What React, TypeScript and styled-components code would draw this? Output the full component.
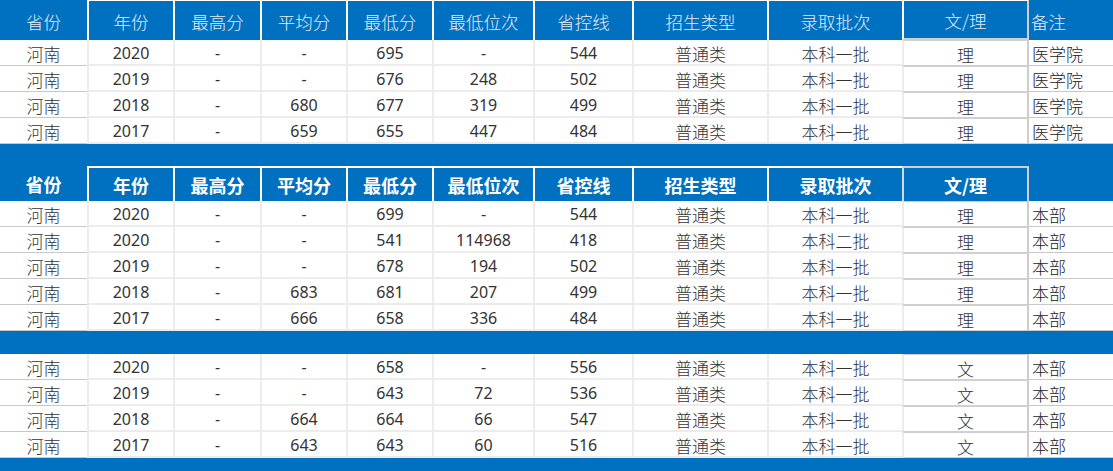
import React from "react";
import styled, { createGlobalStyle, css } from "styled-components";

const GlobalStyle = createGlobalStyle`
  html, body { margin: 0; padding: 0; background: #ffffff; }
  body { font-family: "Noto Sans", "Noto Sans CJK SC", sans-serif; }
  * { box-sizing: border-box; }
`;

const BLUE = "#0070c0";
const WIDTHS = [87, 86, 87, 86, 86, 101, 99, 135, 135, 127, 84];
const COLS = WIDTHS.map((w) => `${w}px`).join(" ");

const Page = styled.div`
  width: 1113px;
  display: flex;
  flex-direction: column;
`;

const Grid = styled.div<{ $rows: string }>`
  display: grid;
  grid-template-columns: ${COLS};
  grid-template-rows: ${(p) => p.$rows};
`;

const Band = styled.div<{ $from: number; $to: number }>`
  grid-column: ${(p) => p.$from} / ${(p) => p.$to};
  background: ${BLUE};
`;

type HeadKind = "plain" | "bold";

const HeadCell = styled.div<{
  $kind: HeadKind;
  $first?: boolean;
  $left?: boolean;
  $wl?: boolean;
  $tall?: boolean;
  $col?: number;
}>`
  background: ${BLUE};
  display: flex;
  align-items: center;
  justify-content: ${(p) => (p.$left ? "flex-start" : "center")};
  padding-left: ${(p) => (p.$left ? "2px" : "0")};
  font-family: "Noto Sans CJK SC", sans-serif;
  white-space: nowrap;
  ${(p) =>
    p.$kind === "plain"
      ? css`
          color: #e4ecf5;
          font-size: 17.5px;
          font-weight: 300;
          padding-top: 2px;
        `
      : css`
          color: #ffffff;
          font-size: 18px;
          font-weight: 700;
        `}
  ${(p) =>
    !p.$first &&
    css`
      border-left: 2px solid #ffffff;
    `}
  ${(p) =>
    p.$kind === "plain" &&
    !p.$first &&
    !p.$left &&
    css`
      border-top: 1px solid #ffffff;
    `}
  ${(p) =>
    p.$kind === "bold" &&
    !p.$first &&
    css`
      border-top: 2px solid #ffffff;
    `}
  ${(p) =>
    p.$wl &&
    css`
      border-bottom: 2px solid #cfcfcf;
      border-right: 2px solid #cfcfcf;
    `}
  ${(p) =>
    p.$wl &&
    p.$kind === "bold" &&
    css`
      border-top: 2px solid #cfcfcf;
      border-left: 2px solid #d8d8d8;
      border-bottom: 0;
    `}
  ${(p) =>
    p.$tall &&
    css`
      grid-row: 1 / span 2;
      grid-column: ${p.$col};
      padding-top: 22px;
    `}
`;

type CellKind = "prov" | "mid" | "wl" | "note";

const Cell = styled.div<{ $kind: CellKind; $num: boolean }>`
  background: #ffffff;
  display: flex;
  align-items: center;
  justify-content: ${(p) => (p.$kind === "note" ? "flex-start" : "center")};
  padding-top: 2px;
  white-space: nowrap;
  color: #333333;
  font-family: ${(p) =>
    p.$num ? `"Noto Sans", sans-serif` : `"Noto Sans CJK SC", sans-serif`};
  font-size: ${(p) => (p.$num ? "16px" : "17px")};
  font-weight: ${(p) => (p.$num ? 400 : 300)};
  ${(p) =>
    p.$kind === "prov" &&
    css`
      border-bottom: 1px solid #c8c8c8;
    `}
  ${(p) =>
    p.$kind === "mid" &&
    css`
      border-left: 2px solid #ececec;
      border-bottom: 2px solid #ececec;
    `}
  ${(p) =>
    p.$kind === "wl" &&
    css`
      border-left: 2px solid #ececec;
      border-right: 2px solid #cdcdcd;
      border-top: 1px solid #d0d0d0;
      border-bottom: 1px solid #d0d0d0;
    `}
  ${(p) =>
    p.$kind === "note" &&
    css`
      padding-left: 3px;
      border-bottom: 1px solid #c8c8c8;
      color: #222222;
    `}
`;

const HEADERS = ["年份", "最高分", "平均分", "最低分", "最低位次", "省控线", "招生类型", "录取批次", "文/理"];

type Row = string[];

const T1: Row[] = [
  ["河南", "2020", "-", "-", "695", "-", "544", "普通类", "本科一批", "理", "医学院"],
  ["河南", "2019", "-", "-", "676", "248", "502", "普通类", "本科一批", "理", "医学院"],
  ["河南", "2018", "-", "680", "677", "319", "499", "普通类", "本科一批", "理", "医学院"],
  ["河南", "2017", "-", "659", "655", "447", "484", "普通类", "本科一批", "理", "医学院"],
];

const T2: Row[] = [
  ["河南", "2020", "-", "-", "699", "-", "544", "普通类", "本科一批", "理", "本部"],
  ["河南", "2020", "-", "-", "541", "114968", "418", "普通类", "本科二批", "理", "本部"],
  ["河南", "2019", "-", "-", "678", "194", "502", "普通类", "本科一批", "理", "本部"],
  ["河南", "2018", "-", "683", "681", "207", "499", "普通类", "本科一批", "理", "本部"],
  ["河南", "2017", "-", "666", "658", "336", "484", "普通类", "本科一批", "理", "本部"],
];

const T3: Row[] = [
  ["河南", "2020", "-", "-", "658", "-", "556", "普通类", "本科一批", "文", "本部"],
  ["河南", "2019", "-", "-", "643", "72", "536", "普通类", "本科一批", "文", "本部"],
  ["河南", "2018", "-", "664", "664", "66", "547", "普通类", "本科一批", "文", "本部"],
  ["河南", "2017", "-", "643", "643", "60", "516", "普通类", "本科一批", "文", "本部"],
];

const kindFor = (i: number): CellKind =>
  i === 0 ? "prov" : i === 9 ? "wl" : i === 10 ? "note" : "mid";

const isNum = (s: string) => /^[0-9-]+$/.test(s);

const DataRows: React.FC<{ rows: Row[] }> = ({ rows }) => (
  <>
    {rows.map((r, ri) =>
      r.map((v, ci) => (
        <Cell key={`${ri}-${ci}`} $kind={kindFor(ci)} $num={isNum(v)}>
          {v}
        </Cell>
      ))
    )}
  </>
);

export default function App() {
  return (
    <Page>
      <GlobalStyle />
      <Grid $rows="40px repeat(4, 26px)">
        <HeadCell $kind="plain" $first>
          省份
        </HeadCell>
        {HEADERS.map((h, i) => (
          <HeadCell key={h} $kind="plain" $wl={i === 8}>
            {h}
          </HeadCell>
        ))}
        <HeadCell $kind="plain" $left $first>
          备注
        </HeadCell>
        <DataRows rows={T1} />
      </Grid>

      <Grid $rows="22px 35px repeat(5, 26px)">
        <HeadCell $kind="bold" $first $tall $col={1}>
          省份
        </HeadCell>
        <Band $from={2} $to={11} />
        <HeadCell $kind="bold" $first $tall $col={11} />
        {HEADERS.map((h, i) => (
          <HeadCell key={h} $kind="bold" $wl={i === 8}>
            {h}
          </HeadCell>
        ))}
        <DataRows rows={T2} />
      </Grid>

      <Grid $rows="23px repeat(4, 26px) 13px">
        <Band $from={1} $to={12} />
        <DataRows rows={T3} />
        <Band $from={1} $to={12} />
      </Grid>
    </Page>
  );
}
